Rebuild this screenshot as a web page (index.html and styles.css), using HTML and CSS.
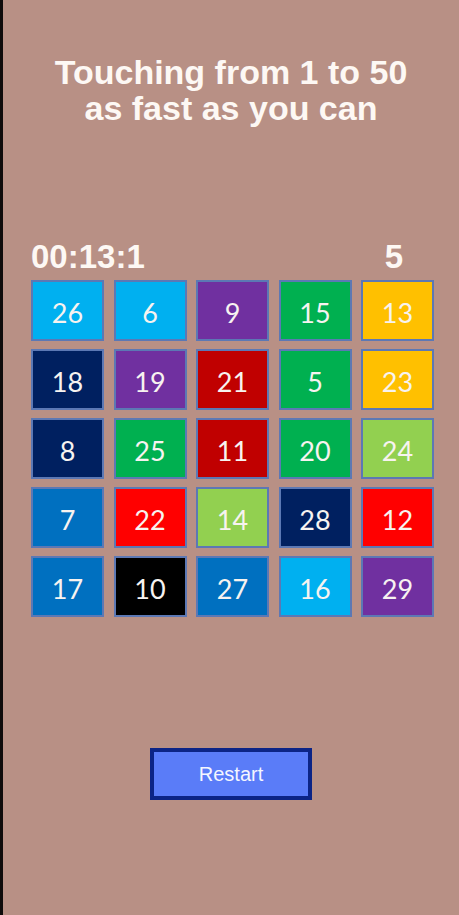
FILE: index.html
```html
<!DOCTYPE html>
<html>
<head>
<meta charset="utf-8">
<link rel="stylesheet" href="styles.css">
</head>
<body>
<div class="page">
  <h1 class="title">Touching from 1 to 50<br>as fast as you can</h1>
  <div class="status">
    <span class="timer">00:13:1</span>
    <span class="score">5</span>
  </div>
  <div class="board">
    <div class="tile c-sky">26</div>
    <div class="tile c-sky">6</div>
    <div class="tile c-purple">9</div>
    <div class="tile c-green">15</div>
    <div class="tile c-gold">13</div>

    <div class="tile c-navy">18</div>
    <div class="tile c-purple">19</div>
    <div class="tile c-darkred">21</div>
    <div class="tile c-green">5</div>
    <div class="tile c-gold">23</div>

    <div class="tile c-navy">8</div>
    <div class="tile c-green">25</div>
    <div class="tile c-darkred">11</div>
    <div class="tile c-green">20</div>
    <div class="tile c-lime">24</div>

    <div class="tile c-blue">7</div>
    <div class="tile c-red">22</div>
    <div class="tile c-lime">14</div>
    <div class="tile c-navy">28</div>
    <div class="tile c-red">12</div>

    <div class="tile c-blue">17</div>
    <div class="tile c-black">10</div>
    <div class="tile c-blue">27</div>
    <div class="tile c-sky">16</div>
    <div class="tile c-purple">29</div>
  </div>
  <div class="actions">
    <button class="restart">Restart</button>
  </div>
</div>
</body>
</html>
```

FILE: styles.css
```css
html, body {
  margin: 0;
  padding: 0;
  background: #b89085;
}

.page {
  box-sizing: border-box;
  min-height: 915px;
  border-left: 3px solid #0e0b0b;
  background: #b89085;
  font-family: "Liberation Sans", Arial, sans-serif;
  color: #fdf8f4;
  display: flex;
  flex-direction: column;
}

.title {
  margin: 54px 0 0 0;
  font-size: 34px;
  line-height: 36px;
  font-weight: bold;
  text-align: center;
  color: #fdf8f4;
}

.status {
  margin-top: 113px;
  padding: 0 56px 0 28px;
  display: flex;
  justify-content: space-between;
  align-items: baseline;
  font-weight: bold;
  font-size: 33px;
  line-height: 36px;
}

.board {
  margin-top: 5px;
  padding-left: 28px;
  display: grid;
  grid-template-columns: repeat(5, 73px);
  grid-auto-rows: 61px;
  column-gap: 9.5px;
  row-gap: 8px;
}

.tile {
  box-sizing: border-box;
  border: 2px solid #5c78b4;
  display: flex;
  align-items: center;
  justify-content: center;
  padding-top: 4px;
  font-family: Lato, "Open Sans", sans-serif;
  font-size: 27px;
  color: #f7f3f0;
}

.c-sky { background: #00b0f0; }
.c-purple { background: #7030a0; }
.c-green { background: #00b050; }
.c-gold { background: #ffc000; }
.c-navy { background: #002060; }
.c-darkred { background: #c00000; }
.c-lime { background: #92d050; }
.c-blue { background: #0070c0; }
.c-red { background: #ff0000; }
.c-black { background: #000000; }

.actions {
  margin-top: 131px;
  display: flex;
  justify-content: center;
}

.restart {
  box-sizing: border-box;
  width: 162px;
  height: 52px;
  border: 4px solid #0c2486;
  background: #5a7cf8;
  color: #f4f6ff;
  font-family: "Liberation Sans", Arial, sans-serif;
  font-size: 20px;
  padding: 0;
}
```
